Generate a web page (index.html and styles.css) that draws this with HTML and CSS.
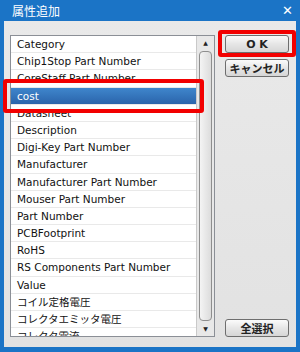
FILE: index.html
```html
<!DOCTYPE html>
<html lang="ja">
<head>
    <meta charset="UTF-8">
    <title>属性追加</title>
    <link rel="stylesheet" href="styles.css">
</head>
<body>
    <div class="window">
        <div class="titlebar">
            <span class="title">属性追加</span>
            <span class="close">✕</span>
        </div>
        <div class="frame">
            <div class="listbox">
                <ul class="items">
                    <li>Category</li>
                    <li>Chip1Stop Part Number</li>
                    <li>CoreStaff Part Number</li>
                    <li class="selected">cost</li>
                    <li>Datasheet</li>
                    <li>Description</li>
                    <li>Digi-Key Part Number</li>
                    <li>Manufacturer</li>
                    <li>Manufacturer Part Number</li>
                    <li>Mouser Part Number</li>
                    <li>Part Number</li>
                    <li>PCBFootprint</li>
                    <li>RoHS</li>
                    <li>RS Components Part Number</li>
                    <li>Value</li>
                    <li>コイル定格電圧</li>
                    <li>コレクタエミッタ電圧</li>
                    <li>コレクタ電流</li>
                </ul>
                <div class="scrollbar">
                    <div class="arrow up">▲</div>
                    <div class="thumb"></div>
                    <div class="arrow down">▼</div>
                </div>
            </div>
            <div class="buttons">
                <button class="btn">O K</button>
                <button class="btn">キャンセル</button>
                <button class="btn bottom">全選択</button>
            </div>
            <div class="mark mark-row"></div>
            <div class="mark mark-ok"></div>
        </div>
    </div>
</body>
</html>
```

FILE: styles.css
```css
body {
    margin: 0;
    font-family: "DejaVu Sans", "Noto Sans CJK JP", sans-serif;
}
.window {
    width: 300px;
    height: 352px;
    position: relative;
}
.titlebar {
    height: 21px;
    background: #1b74c6;
    color: white;
    display: flex;
    align-items: center;
    justify-content: space-between;
    padding: 0 7px 0 12px;
}
.title {
    font-family: "Noto Sans CJK JP", sans-serif;
    font-size: 12px;
}
.close {
    font-size: 13px;
}
.frame {
    height: 326px;
    background: linear-gradient(#e9e9e9, #e2e2e2);
    border: 4px solid #1b74c6;
    border-top: none;
    border-bottom-width: 5px;
    display: flex;
    padding: 14px 0 0 6px;
    box-sizing: border-box;
    height: 331px;
}
.listbox {
    width: 205px;
    height: 302px;
    border: 1px solid #8b8f96;
    background: white;
    box-sizing: border-box;
    display: flex;
    overflow: hidden;
}
.items {
    list-style: none;
    margin: 0;
    padding: 0;
    flex: 1;
    font-size: 10.5px;
    color: #111;
}
.items li {
    height: 17.2px;
    line-height: 16px;
    padding-left: 6px;
    border-bottom: 1px solid #e9e9e9;
    box-sizing: border-box;
    white-space: nowrap;
    overflow: hidden;
}
.items li.selected {
    background: linear-gradient(#3f86cc, #2a64ab);
    color: white;
}
.scrollbar {
    width: 17px;
    border-left: 1px solid #c9c9c9;
    background: #e8e8e8;
    display: flex;
    flex-direction: column;
    align-items: center;
    flex-shrink: 0;
}
.arrow {
    font-size: 6px;
    height: 14px;
    line-height: 14px;
    color: #222;
}
.thumb {
    flex: 1;
    width: 11px;
    border: 1px solid #8e8e8e;
    border-radius: 4px;
    background: linear-gradient(90deg, #f4f4f4, #dcdcdc);
    margin: 1px 0;
}
.buttons {
    display: flex;
    flex-direction: column;
    gap: 6px;
    margin-left: 10px;
    width: 64px;
    height: 302px;
}
.btn {
    height: 18px;
    padding: 0;
    border: 1px solid #6e6e6e;
    border-radius: 3px;
    background: linear-gradient(#fbfbfb, #e6e6e6 50%, #d6d6d6);
    font-family: "DejaVu Sans", "Noto Sans CJK JP", sans-serif;
    font-size: 11px;
    font-weight: bold;
    color: #222;
}
.btn.bottom {
    margin-top: auto;
}
.mark {
    position: absolute;
    border: 4px solid #f20000;
    border-radius: 3px;
    box-sizing: border-box;
}
.mark-row {
    left: 3px;
    top: 79px;
    width: 201px;
    height: 34px;
}
.mark-ok {
    left: 218px;
    top: 30px;
    width: 78px;
    height: 27px;
}
```
